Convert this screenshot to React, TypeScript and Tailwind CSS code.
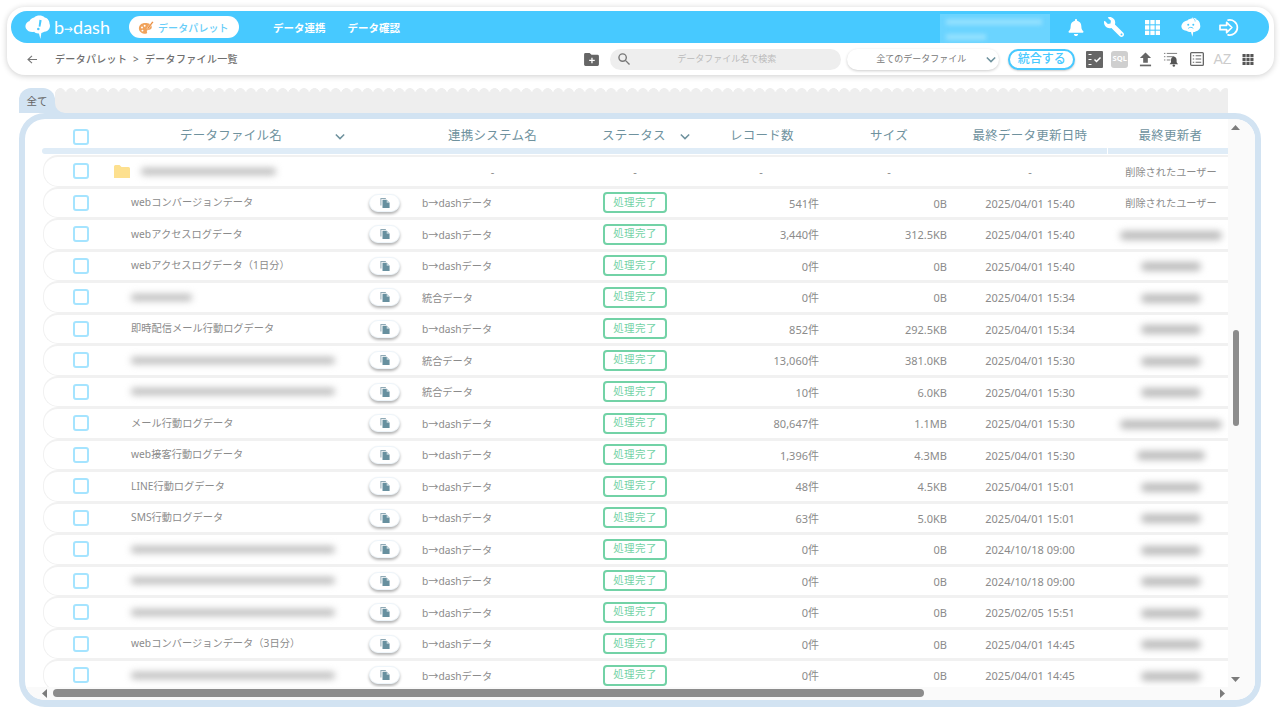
import React from "react";
import { FaBell, FaWrench } from "react-icons/fa";

const B = "#47c9ff";

type Row = {
  name?: string;
  blur?: number;
  sys: string;
  rec: string;
  size: string;
  date: string;
  user?: string;
  ublur?: number;
};

const rows: Row[] = [
  { name: "webコンバージョンデータ", sys: "b→dashデータ", rec: "541件", size: "0B", date: "2025/04/01 15:40", user: "削除されたユーザー" },
  { name: "webアクセスログデータ", sys: "b→dashデータ", rec: "3,440件", size: "312.5KB", date: "2025/04/01 15:40", ublur: 102 },
  { name: "webアクセスログデータ（1日分）", sys: "b→dashデータ", rec: "0件", size: "0B", date: "2025/04/01 15:40", ublur: 60 },
  { blur: 61, sys: "統合データ", rec: "0件", size: "0B", date: "2025/04/01 15:34", ublur: 60 },
  { name: "即時配信メール行動ログデータ", sys: "b→dashデータ", rec: "852件", size: "292.5KB", date: "2025/04/01 15:34", ublur: 60 },
  { blur: 204, sys: "統合データ", rec: "13,060件", size: "381.0KB", date: "2025/04/01 15:30", ublur: 60 },
  { blur: 204, sys: "統合データ", rec: "10件", size: "6.0KB", date: "2025/04/01 15:30", ublur: 60 },
  { name: "メール行動ログデータ", sys: "b→dashデータ", rec: "80,647件", size: "1.1MB", date: "2025/04/01 15:30", ublur: 102 },
  { name: "web接客行動ログデータ", sys: "b→dashデータ", rec: "1,396件", size: "4.3MB", date: "2025/04/01 15:30", ublur: 68 },
  { name: "LINE行動ログデータ", sys: "b→dashデータ", rec: "48件", size: "4.5KB", date: "2025/04/01 15:01", ublur: 60 },
  { name: "SMS行動ログデータ", sys: "b→dashデータ", rec: "63件", size: "5.0KB", date: "2025/04/01 15:01", ublur: 60 },
  { blur: 204, sys: "b→dashデータ", rec: "0件", size: "0B", date: "2024/10/18 09:00", ublur: 60 },
  { blur: 204, sys: "b→dashデータ", rec: "0件", size: "0B", date: "2024/10/18 09:00", ublur: 60 },
  { blur: 204, sys: "b→dashデータ", rec: "0件", size: "0B", date: "2025/02/05 15:51", ublur: 60 },
  { name: "webコンバージョンデータ（3日分）", sys: "b→dashデータ", rec: "0件", size: "0B", date: "2025/04/01 14:45", ublur: 60 },
  { blur: 204, sys: "b→dashデータ", rec: "0件", size: "0B", date: "2025/04/01 14:45", ublur: 60 },
];

function Blur({ w, h = 7 }: { w: number; h?: number }) {
  return <div className="bg-[#bcbcbc] blur-[3.500px] rounded-full" style={{ width: w, height: h }} />;
}

function Check() {
  return <div className="w-[16px] h-[16px] border-2 border-[#a5e4ff] rounded-[3px] bg-white" />;
}

function Chevron({ className = "" }: { className?: string }) {
  return (
    <svg viewBox="0 0 12 8" className={"w-[10px] h-[7px] " + className} fill="none" stroke="#6f929e" strokeWidth="1.8">
      <path d="M1 1.5l5 5 5-5" />
    </svg>
  );
}

function CopyIcon() {
  return (
    <svg viewBox="0 0 12 12" className="w-[10px] h-[10px]">
      <path d="M0.5 0h6.500v1.200H1.700V9H0.500z" fill="#8fa9b5" />
      <path d="M3 2.200h5L11.500 5.700V12H3z" fill="#67909f" />
      <path d="M8 2.200v3.500h3.500z" fill="#c5d6dd" />
    </svg>
  );
}

function Logo() {
  return (
    <div className="flex items-center w-[86px] h-[24px]">
      <svg viewBox="0 0 28 26" className="w-[28px] h-[25px] shrink-0">
        <path d="M10 2.5c3-2.5 8-2.5 11 0 2 .2 5 2.5 5 6.500 1.600 3.500-1 8-5.500 8.500-1 .6-2 1-3 1.200L16.500 25l-1.500-5.800c-2 .3-4-.5-5-1.700-3 .8-7-.5-8.500-3.500C0 11 2 7 5 6.500 6 4 8 2.800 10 2.500z" fill="#fff" />
        <path d="M15.500 5l2.300.4-1.300 6.800-1.800-.3z" fill={B} />
        <circle cx="14.300" cy="14.500" r="1.300" fill={B} />
      </svg>
      <span className="ml-[2px] text-[18px] leading-none text-white font-['Lato',sans-serif] font-normal whitespace-nowrap">
        b<span className="text-[9px] font-bold align-[2px]">→</span>dash
      </span>
    </div>
  );
}

function Palette() {
  return (
    <svg viewBox="0 0 18 16" className="w-[16px] h-[15px]">
      <path d="M8 3C4 3 1 5.500 1 9s3.500 6 7.500 6c2 0 2-1.500 1.500-2.500-.4-1 .2-1.800 1.500-1.800 2 0 4-.8 4-3C15.500 4.500 12 3 8 3z" fill="#f0a35c" />
      <circle cx="4.500" cy="8" r="1.100" fill="#fff" />
      <circle cx="7.500" cy="6" r="1.100" fill="#fff" />
      <circle cx="5" cy="11.500" r="1.100" fill="#fff" />
      <path d="M10 9l6-8 1.500 1-6 8z" fill="#e98a3a" stroke="#fff" strokeWidth=".5" />
    </svg>
  );
}

function BrainBubble() {
  return (
    <svg viewBox="0 0 24 24" className="w-[22px] h-[22px]">
      <path d="M8 5c2-2.500 7-3.500 9.500-1.500C20 4 22 6.500 22 10c.8 3-1.500 6-4.500 6.500-1 .6-2 1-3 1l-1 5-1.500-5c-2 0-4-.5-5-1.500-3 .2-5.500-2-5.500-4.500C1.500 8.500 4.500 5.500 8 5z" fill="#fff" />
      <path d="M13 1.500l5 1.500-2 3z" fill="#fff" />
      <path d="M14.500 2.500c1.500 1 2 2 2 3.500" stroke={B} strokeWidth=".8" fill="none" />
      <circle cx="9" cy="9.500" r="1.100" fill={B} />
      <circle cx="14.500" cy="9.500" r="1.100" fill={B} />
      <path d="M9 13.500c1.500-1.500 4-1.500 5.500 0" stroke={B} strokeWidth="1" fill="none" />
    </svg>
  );
}

function LogoutIcon() {
  return (
    <svg viewBox="0 0 22 20" className="w-[21px] h-[19px]" fill="none" stroke="#fff" strokeWidth="1.800">
      <path d="M9.500 2.200a8 8 0 1 1 0 15.600" strokeLinecap="round" />
      <path d="M1 7.700h7V4.500l5.500 5.500L8 15.500v-3.200H1z" strokeLinejoin="round" />
    </svg>
  );
}

function GridIcon({ w, h, color }: { w: number; h: number; color: string }) {
  const cells = [0, 1, 2];
  return (
    <svg viewBox="0 0 14 14" style={{ width: w, height: h }}>
      {cells.map((y) =>
        cells.map((x) => <rect key={x + "-" + y} x={x * 5} y={y * 5} width="4" height="4" fill={color} />)
      )}
    </svg>
  );
}

function BarIcon({ children }: { children: React.ReactNode }) {
  return <div className="w-[38.500px] flex items-center justify-center">{children}</div>;
}

function ToolIcon({ children }: { children: React.ReactNode }) {
  return <div className="w-[25.700px] flex items-center justify-center">{children}</div>;
}

function ChecklistIcon() {
  return (
    <svg viewBox="0 0 17 17" className="w-[17px] h-[17px]">
      <rect width="17" height="17" rx="1" fill="#666" />
      <path d="M2.500 3.500h3M2.500 8.500h3M2.500 13.500h3" stroke="#fff" strokeWidth="1.200" />
      <path d="M8.500 8.500l2 2 4-4" stroke="#fff" strokeWidth="1.500" fill="none" />
    </svg>
  );
}

function UploadIcon() {
  return (
    <svg viewBox="0 0 14 16" className="w-[13px] h-[15px]">
      <path d="M7 0.500l6 6H9.500v5h-5v-5H1z" fill="#666" />
      <rect x="1" y="13.500" width="12" height="1.800" fill="#666" />
    </svg>
  );
}

function ListBellIcon() {
  return (
    <svg viewBox="0 0 17 16" className="w-[16px] h-[15px]">
      <path d="M1 1.500h1.500M4 1.500h11M1 5h1.500M4 5h8M1 8.500h1.500M4 8.500h4" stroke="#777" strokeWidth="1" />
      <path d="M11.500 5c2 0 3 1.500 3 3.500V11l1.500 2H7l1.500-2V8.500c0-2 1-3.500 3-3.500z" fill="#555" />
      <circle cx="11.500" cy="14.500" r="1.300" fill="#555" />
    </svg>
  );
}

function TableIcon() {
  return (
    <svg viewBox="0 0 15 15" className="w-[14px] h-[14px]" fill="none">
      <rect x=".7" y=".7" width="13.600" height="13.600" rx="1" stroke="#666" strokeWidth="1.400" />
      <path d="M3 4h1.500M3 7.500h1.500M3 11h1.500M6 4h6M6 7.500h6M6 11h6" stroke="#666" strokeWidth="1.200" />
    </svg>
  );
}

function Tri({ dir }: { dir: "u" | "d" | "l" | "r" }) {
  const d = { u: "M0 6L4.500 1 9 6z", d: "M0 1l4.500 5L9 1z", l: "M6 0L1 4.500 6 9z", r: "M1 0l5 4.500L1 9z" }[dir];
  return (
    <svg viewBox={dir === "u" || dir === "d" ? "0 0 9 7" : "0 0 7 9"} className={dir === "u" || dir === "d" ? "w-[9px] h-[7px]" : "w-[7px] h-[9px]"}>
      <path d={d} fill="#7b7b7b" />
    </svg>
  );
}

function RowShell({ children }: { children: React.ReactNode }) {
  return (
    <div className="h-[31.500px] shrink-0 flex items-center bg-white border-t-2 border-b border-l border-[#f1f1f1] rounded-l-[15px] text-[11px] text-[#8b8b8b] box-border">
      {children}
    </div>
  );
}

function CheckCell() {
  return (
    <div className="w-[70px] shrink-0 pl-[28.500px]">
      <Check />
    </div>
  );
}

function DataRow({ r }: { r: Row }) {
  return (
    <RowShell>
      <CheckCell />
      <div className="w-[246px] shrink-0 pl-[17px] text-[10.200px] tracking-[0.05px] whitespace-nowrap">
        {r.name ? r.name : <Blur w={r.blur ?? 100} />}
      </div>
      <div className="w-[62px] shrink-0 pl-[9px]">
        <button className="w-[31px] h-[18px] rounded-full bg-white border border-[#eef5fa] shadow-[0_2px_3px_rgba(0,0,0,0.3)] flex items-center justify-center">
          <CopyIcon />
        </button>
      </div>
      <div className="w-[141px] shrink-0 pt-[2px] text-[10.200px] whitespace-nowrap">{r.sys}</div>
      <div className="w-[144px] shrink-0 flex justify-center">
        <div className="w-[64px] h-[21px] border-2 border-[#72d2a6] rounded-[4px] text-[#72d2a6] text-[10.500px] tracking-[0.4px] flex items-center justify-center whitespace-nowrap">
          処理完了
        </div>
      </div>
      <div className="w-[112px] shrink-0 pt-[2px] text-right">{r.rec}</div>
      <div className="w-[128px] shrink-0 pt-[2px] text-right">{r.size}</div>
      <div className="w-[166px] shrink-0 pt-[2px] text-center whitespace-nowrap">{r.date}</div>
      <div className="w-[116px] shrink-0 pt-[2px] flex justify-center text-[10.200px] whitespace-nowrap">
        {r.user ? r.user : <Blur w={r.ublur ?? 60} h={9} />}
      </div>
    </RowShell>
  );
}

function FolderRow() {
  return (
    <RowShell>
      <CheckCell />
      <div className="w-[246px] shrink-0 flex items-center">
        <svg viewBox="0 0 16 13" className="w-[16px] h-[13px]">
          <path d="M0 1.500A1.500 1.500 0 0 1 1.500 0h4L7.500 2h7A1.500 1.500 0 0 1 16 3.500V13H0z" fill="#fde08f" />
        </svg>
        <div className="ml-[11px]">
          <Blur w={135} />
        </div>
      </div>
      <div className="w-[62px] shrink-0" />
      <div className="w-[141px] shrink-0 pt-[2px] text-center">-</div>
      <div className="w-[144px] shrink-0 pt-[2px] text-center">-</div>
      <div className="w-[112px] shrink-0 pt-[2px] pr-[4px] text-center">-</div>
      <div className="w-[128px] shrink-0 pt-[2px] pl-[12px] text-center">-</div>
      <div className="w-[166px] shrink-0 pt-[2px] text-center">-</div>
      <div className="w-[116px] shrink-0 pt-[2px] text-center text-[10.200px] whitespace-nowrap">削除されたユーザー</div>
    </RowShell>
  );
}

export default function App() {
  return (
    <div className="w-[1280px] h-[720px] bg-white overflow-hidden flex flex-col font-['Noto_Sans','Noto_Sans_CJK_JP',sans-serif]">
      {/* header card */}
      <div className="mt-[7px] ml-[7px] w-[1267px] h-[68px] shrink-0 rounded-[18px] bg-white shadow-[0_1px_6px_rgba(0,0,0,0.2)] pt-[4px] pl-[4px] pr-[5px] flex flex-col">
        <div className="h-[32px] shrink-0 rounded-full bg-[#47c9ff] flex items-center pl-[13px] pr-[20px]">
          <Logo />
          <div className="ml-[19px] w-[110px] h-[22px] rounded-full bg-white flex items-center pl-[9px] gap-[4px]">
            <Palette />
            <span className="mt-[2px] text-[10px] font-medium tracking-[0.1px] text-[#68cdf8] whitespace-nowrap">データパレット</span>
          </div>
          <span className="ml-[34px] mt-[3px] text-[10.500px] font-bold text-white whitespace-nowrap">データ連携</span>
          <span className="ml-[22px] mt-[3px] text-[10.500px] font-bold text-white whitespace-nowrap">データ確認</span>
          <div className="ml-auto mr-[7px] w-[110px] h-[29px] self-end bg-[#6bd4ff] flex flex-col gap-[9px] pt-[5px] pl-[6px]">
            <div className="w-[96px] h-[6px] bg-[#93e0ff] blur-[2px]" />
            <div className="w-[40px] h-[6px] bg-[#93e0ff] blur-[2px]" />
          </div>
          <BarIcon>
            <FaBell className="w-[16px] h-[17px] text-white" />
          </BarIcon>
          <BarIcon>
            <FaWrench className="w-[20px] h-[20px] text-white -scale-x-100" />
          </BarIcon>
          <BarIcon>
            <GridIcon w={15} h={15} color="#fff" />
          </BarIcon>
          <BarIcon>
            <BrainBubble />
          </BarIcon>
          <BarIcon>
            <LogoutIcon />
          </BarIcon>
        </div>
        <div className="h-[32px] shrink-0 flex items-center pl-[16px] pr-[8px]">
          <svg viewBox="0 0 10 9" className="w-[10px] h-[9px] mr-[18px]" fill="none" stroke="#777" strokeWidth="1.100">
            <path d="M5 .8L1 4.500 5 8.200M1 4.500h9" />
          </svg>
          <span className="mt-[1px] text-[10px] font-medium text-[#6f6f6f] tracking-[0.32px] whitespace-nowrap">データパレット &nbsp;&gt;&nbsp; データファイル一覧</span>
          <svg viewBox="0 0 16 14" className="ml-auto w-[15px] h-[13px]">
            <path d="M0 1.500A1.500 1.500 0 0 1 1.500 0h4.500L8 2h6.500A1.500 1.500 0 0 1 16 3.500V12.500a1.500 1.500 0 0 1-1.500 1.500h-13A1.500 1.500 0 0 1 0 12.500z" fill="#666" />
            <path d="M8.500 5v6M5.500 8h6" stroke="#fff" strokeWidth="1.400" />
          </svg>
          <div className="ml-[11px] w-[231px] h-[21px] rounded-full bg-[#eeeeee] flex items-center pl-[8px] pr-[65px]">
            <svg viewBox="0 0 13 13" className="w-[12px] h-[12px]" fill="none" stroke="#777" strokeWidth="1.500">
              <circle cx="5" cy="5" r="4" />
              <path d="M8 8l4.500 4.500" />
            </svg>
            <span className="ml-auto text-[9px] text-[#bbbbbb] whitespace-nowrap">データファイル名で検索</span>
          </div>
          <div className="ml-[6px] w-[152px] h-[21px] rounded-full bg-white shadow-[0_1px_3px_rgba(0,0,0,0.2)] flex items-center pl-[29px] pr-[3px]">
            <span className="text-[9px] text-[#777] whitespace-nowrap">全てのデータファイル</span>
            <Chevron className="ml-auto" />
          </div>
          <button className="ml-[9px] w-[67px] h-[21px] rounded-full border-2 border-[#47c9ff] bg-white text-[12px] font-medium text-[#47c9ff] flex items-center justify-center whitespace-nowrap shadow-[0_1px_2px_rgba(0,0,0,0.2)]">
            統合する
          </button>
          <div className="ml-[6px] flex items-center">
            <ToolIcon>
              <ChecklistIcon />
            </ToolIcon>
            <ToolIcon>
              <div className="w-[17px] h-[17px] rounded-[3px] bg-[#cfcfcf] text-white text-[7.500px] font-bold flex items-center justify-center">SQL</div>
            </ToolIcon>
            <ToolIcon>
              <UploadIcon />
            </ToolIcon>
            <ToolIcon>
              <ListBellIcon />
            </ToolIcon>
            <ToolIcon>
              <TableIcon />
            </ToolIcon>
            <ToolIcon>
              <span className="text-[14px] leading-none text-[#cccccc] font-['Liberation_Sans',sans-serif]">AZ</span>
            </ToolIcon>
            <ToolIcon>
              <GridIcon w={12} h={11} color="#555" />
            </ToolIcon>
          </div>
        </div>
      </div>

      {/* tabs */}
      <div className="mt-[13px] ml-[19px] h-[25px] shrink-0 flex">
        <div className="w-[36px] h-[25px] pt-[2px] rounded-t-[12px] bg-[#d2e3f2] flex items-center justify-center text-[10.500px] text-[#666] whitespace-nowrap">全て</div>
        <div className="w-[1173px] flex flex-col">
          <div className="h-[6px] shrink-0 bg-[radial-gradient(circle_at_50%_5.300px,#eeeeee_4.900px,transparent_5.400px)] bg-[length:10.600px_12px] bg-repeat-x" />
          <div className="flex-1 bg-[linear-gradient(to_right,#d2e3f2_12px,transparent_12px)]">
            <div className="h-full bg-[#eeeeee] rounded-bl-[10px]" />
          </div>
        </div>
      </div>

      {/* panel */}
      <div className="ml-[19px] w-[1242px] h-[594px] shrink-0 border-[6px] border-b-[7px] border-[#d2e3f2] rounded-[26px] bg-white overflow-hidden flex flex-col">
        <div className="flex-1 min-h-0 flex">
          <div className="w-[1203px] shrink-0 flex flex-col overflow-hidden">
            {/* header row */}
            <div className="h-[29px] shrink-0 flex items-center pt-[6px] text-[12.500px] text-[#6f929e] tracking-[0.25px] pl-[19px] whitespace-nowrap">
              <CheckCell />
              <div className="w-[308px] shrink-0 pl-[66px] flex items-center">
                <span className="w-[155px]">データファイル名</span>
                <Chevron />
              </div>
              <div className="w-[141px] shrink-0 pl-[26px]">連携システム名</div>
              <div className="w-[144px] shrink-0 pl-[39px] flex items-center">
                <span className="w-[78px]">ステータス</span>
                <Chevron />
              </div>
              <div className="w-[112px] shrink-0 pl-[23px]">レコード数</div>
              <div className="w-[128px] shrink-0 pl-[51px]">サイズ</div>
              <div className="w-[166px] shrink-0 text-center">最終データ更新日時</div>
              <div className="w-[115px] shrink-0 text-center">最終更新者</div>
            </div>
            <div className="h-[6px] shrink-0 ml-[17px] flex gap-[1px]">
              <div className="w-[1065px] bg-[#dfecf7] rounded-l-full" />
              <div className="flex-1 bg-[#dfecf7]" />
            </div>
            <div className="mt-[1px] ml-[18px] flex flex-col">
              <FolderRow />
              {rows.map((r, i) => (
                <DataRow key={i} r={r} />
              ))}
            </div>
          </div>
          <div className="flex-1 bg-[#fafafa] flex flex-col">
            <div className="w-[15px] flex flex-col items-center h-full">
              <div className="pt-[5px]">
                <Tri dir="u" />
              </div>
              <div className="mt-[199px] w-[6px] h-[96px] rounded-full bg-[#8c8c8c]" />
              <div className="mt-auto mb-[4px]">
                <Tri dir="d" />
              </div>
            </div>
          </div>
        </div>
        <div className="h-[13px] shrink-0 bg-[#fafafa] flex items-start pt-[2px]">
          <div className="ml-[16px] mr-[5px]">
            <Tri dir="l" />
          </div>
          <div className="w-[871px] h-[8px] rounded-full bg-[#8c8c8c]" />
          <div className="ml-[295px]">
            <Tri dir="r" />
          </div>
        </div>
      </div>
    </div>
  );
}
